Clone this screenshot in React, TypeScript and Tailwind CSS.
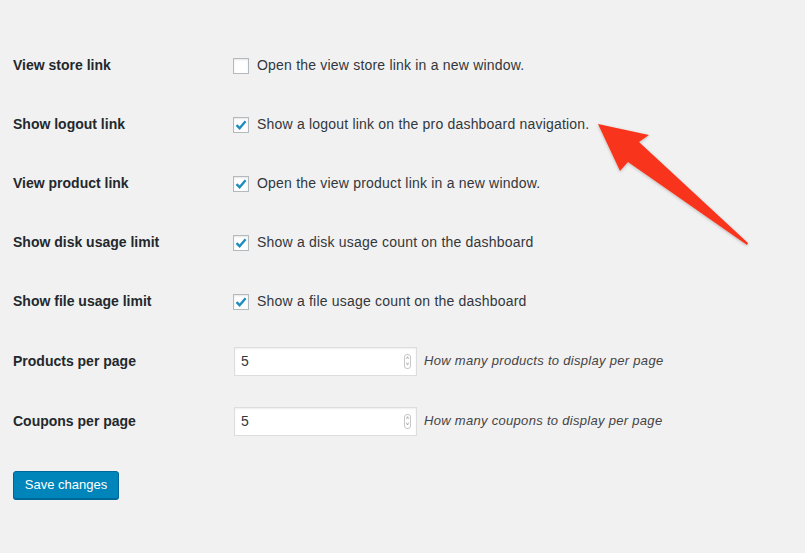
import React from "react";

const font = { fontFamily: '"Liberation Sans", Arial, sans-serif' };

function Check({ checked }: { checked: boolean }) {
  return (
    <span className="flex h-4 w-4 items-center justify-center border border-[#b4b9be] bg-white shadow-[inset_0_1px_2px_rgba(0,0,0,0.1)]">
      {checked && (
        <svg width="14" height="14" viewBox="0 0 14 14">
          <path d="M2.5 7.2 L5.6 10.2 L11.6 3.2" fill="none" stroke="#1e8cbe" strokeWidth="2.4" strokeLinejoin="miter" />
        </svg>
      )}
    </span>
  );
}

function CheckRow({ label, text, checked }: { label: string; text: string; checked: boolean }) {
  return (
    <div className="flex h-[59px] items-center">
      <div className="w-[220px] text-[14px] font-semibold text-[#23282d]">{label}</div>
      <div className="flex items-center gap-2 text-[14px] tracking-[0.2px] text-[#32373c]">
        <Check checked={checked} />
        <span>{text}</span>
      </div>
    </div>
  );
}

function NumberRow({ label, hint }: { label: string; hint: string }) {
  return (
    <div className="flex h-[60px] items-center">
      <div className="w-[221px] text-[14px] font-semibold text-[#23282d]">{label}</div>
      <div className="flex items-center gap-[7px]">
        <div className="flex h-[29px] w-[183px] items-center justify-between border border-[#ddd] bg-white pl-[6px] pr-[5px] shadow-[inset_0_1px_2px_rgba(0,0,0,0.07)]">
          <span className="text-[14px] text-[#32373c]">5</span>
          <span className="flex h-[15px] w-[7px] flex-col items-center justify-center rounded-[3px] border border-[#c8c8c8] text-[6px] leading-[6px] text-[#777]">
            <span>˄</span>
            <span>˅</span>
          </span>
        </div>
        <span className="text-[13px] italic tracking-[0.3px] text-[#444]">{hint}</span>
      </div>
    </div>
  );
}

export default function App() {
  return (
    <div className="relative h-[553px] w-[805px] overflow-hidden bg-[#f1f1f1]" style={font}>
      <div className="pl-[13px] pt-[36px]">
        <CheckRow label="View store link" text="Open the view store link in a new window." checked={false} />
        <CheckRow label="Show logout link" text="Show a logout link on the pro dashboard navigation." checked />
        <CheckRow label="View product link" text="Open the view product link in a new window." checked />
        <CheckRow label="Show disk usage limit" text="Show a disk usage count on the dashboard" checked />
        <CheckRow label="Show file usage limit" text="Show a file usage count on the dashboard" checked />
        <NumberRow label="Products per page" hint="How many products to display per page" />
        <NumberRow label="Coupons per page" hint="How many coupons to display per page" />
        <button className="mt-[20px] h-[28px] w-[106px] rounded-[3px] border border-[#006799] bg-[#0085ba] text-[13px] text-white shadow-[0_1px_0_#006799]">
          Save changes
        </button>
      </div>

      {/* red arrow annotation */}
      <svg className="absolute left-0 top-0" width="805" height="553" viewBox="0 0 805 553">
        <defs>
          <filter id="sh" x="-20%" y="-20%" width="140%" height="140%">
            <feDropShadow dx="0" dy="1" stdDeviation="1.5" floodColor="#000" floodOpacity="0.25" />
          </filter>
        </defs>
        <path
          d="M598 124 L649 135 L639 142 L748 243 L747 245 L628 162 L620 171 Z"
          fill="#f8361c"
          filter="url(#sh)"
        />
      </svg>
    </div>
  );
}
